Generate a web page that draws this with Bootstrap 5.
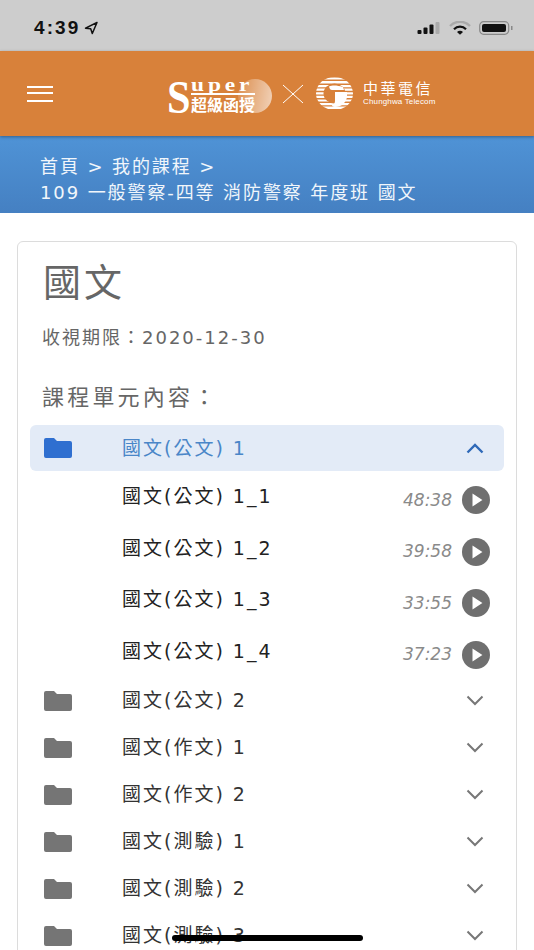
<!DOCTYPE html>
<html lang="zh-Hant">
<head>
    <meta charset="UTF-8" />
    <meta name="viewport" content="width=device-width, initial-scale=1.0"/>
    <title>國文</title>
    <link href="https://cdn.jsdelivr.net/npm/bootstrap@5.3.3/dist/css/bootstrap.min.css" rel="stylesheet"/>
    <style>
        html, body {
            height: 950px;
            overflow: hidden;
        }
        body {
            background-color: #fff;
            font-family: "DejaVu Sans", "Noto Sans CJK TC", sans-serif;
            position: relative;
        }
        .status-bar {
            height: 51px;
            background-color: #cdcdcd;
            padding: 4px 21px 0 34px;
            color: #111;
        }
        .status-time {
            font-family: "Liberation Sans", sans-serif;
            font-size: 19px;
            font-weight: 700;
            letter-spacing: 2.1px;
            line-height: 1;
        }
        .top-bar {
            height: 85px;
            background-color: #d8813a;
            padding-left: 27px;
            box-shadow: 0 1px 3px rgba(0, 0, 0, .35);
            position: relative;
            z-index: 2;
            color: #fff;
        }
        .burger {
            width: 26px;
            height: 16px;
            border-top: 2.5px solid #fff;
            border-bottom: 2.5px solid #fff;
            position: relative;
        }
        .burger::after {
            content: "";
            position: absolute;
            left: 0;
            right: 0;
            top: 4.2px;
            height: 2.5px;
            background: #fff;
        }
        .logo-wrap {
            margin-left: 114px;
        }
        .logo-super {
            width: 105px;
            height: 34px;
            position: relative;
        }
        .logo-s {
            position: absolute;
            left: 0;
            top: -3px;
            font: 700 46px/48px "Liberation Serif", serif;
            transform: scaleX(.92);
            transform-origin: left;
        }
        .logo-uper {
            position: absolute;
            left: 24px;
            top: 0;
            font: 700 18px/16px "Liberation Serif", serif;
            letter-spacing: 3px;
            transform: scaleX(1.3);
            transform-origin: left;
        }
        .logo-rule {
            position: absolute;
            left: 24px;
            top: 16.5px;
            width: 64px;
            height: 2px;
            background: #fff;
        }
        .logo-zh {
            position: absolute;
            left: 24px;
            top: 20.5px;
            font: 700 16px/15px "Noto Sans CJK TC", sans-serif;
            white-space: nowrap;
        }
        .logo-moon {
            position: absolute;
            left: 71px;
            top: 2px;
            width: 34px;
            height: 34px;
            border-radius: 50%;
            background: linear-gradient(100deg, rgba(255, 255, 255, .1), rgba(255, 255, 255, .65));
        }
        .logo-x {
            margin: 0 12px 0 10px;
        }
        .logo-g {
            margin-right: 10px;
        }
        .cht-zh {
            font: 400 15px/15px "Noto Sans CJK TC", sans-serif;
            letter-spacing: 2.5px;
            white-space: nowrap;
        }
        .cht-en {
            font: 400 8px/10px "Liberation Sans", sans-serif;
            white-space: nowrap;
            margin-top: 2px;
            letter-spacing: .15px;
        }
        .crumb-bar {
            height: 77px;
            background: linear-gradient(#4f93d6, #4580c2);
            color: #f1f6fb;
            padding: 18px 0 0 40px;
            font-size: 18px;
            line-height: 26px;
            letter-spacing: 1.9px;
            white-space: nowrap;
        }
        .course-card {
            margin: 28px 17px 0 17px;
            border: 1px solid #dcdcdc;
            border-radius: 6px;
            height: 900px;
            padding: 12px 12px 0 12px;
            color: #666;
        }
        .course-title {
            font-size: 38px;
            line-height: 58px;
            letter-spacing: 3px;
            margin: 0 0 0 13px;
            font-weight: 400;
        }
        .course-limit {
            font-size: 18px;
            line-height: 24px;
            letter-spacing: 2px;
            margin: 14px 0 0 12px;
        }
        .course-sub {
            font-size: 22px;
            line-height: 30px;
            letter-spacing: 3.2px;
            margin: 33px 0 12px 12px;
        }
        .unit-row {
            height: 47px;
            padding: 0 20px 0 14px;
            border-radius: 6px;
            color: #333;
        }
        .unit-row.is-open {
            height: 46px;
            background-color: #e3ebf7;
            color: #4a86c8;
        }
        .unit-name, .lesson-name {
            font-size: 19px;
            letter-spacing: 2px;
            white-space: nowrap;
        }
        .unit-name {
            margin-left: 50px;
        }
        .lesson-row {
            height: 51.5px;
            padding: 7px 14px 0 92px;
            color: #222;
        }
        .lesson-name {
            position: relative;
            top: -4px;
        }
        .lesson-time {
            font-size: 17px;
            font-style: italic;
            color: #8a8a8a;
            margin-right: 10px;
        }
        .home-bar {
            position: absolute;
            left: 172px;
            top: 935px;
            width: 191px;
            height: 6px;
            border-radius: 3px;
            background: #000;
            z-index: 5;
        }
    </style>
</head>
<body>
    <!-- barre iOS -->
    <div class="status-bar d-flex justify-content-between align-items-center">
        <div class="d-flex align-items-center gap-1">
            <span class="status-time">4:39</span>
            <svg width="14" height="14" viewBox="0 0 14 14"><path d="M13 1.5 1.5 7.2l5.2.6 1.6 4.7z" fill="none" stroke="#111" stroke-width="1.5" stroke-linejoin="round"/></svg>
        </div>
        <div class="d-flex align-items-center gap-2">
            <svg width="25" height="14" viewBox="0 0 24 14"><rect x="1" y="9" width="4" height="4" rx="1" fill="#111"/><rect x="7" y="6.5" width="4" height="6.5" rx="1" fill="#111"/><rect x="13" y="3.5" width="4" height="9.5" rx="1" fill="#111"/><rect x="19" y="1" width="4" height="12" rx="1" fill="#aaa"/></svg>
            <svg width="22" height="14" viewBox="0 0 22 14"><path d="M1 5a14 14 0 0 1 20 0" fill="none" stroke="#aaa" stroke-width="2.4"/><path d="M5 8.2a8.5 8.5 0 0 1 12 0" fill="none" stroke="#111" stroke-width="2.2"/><path d="M8 11a4 4 0 0 1 6 0l-3 2.8z" fill="#111"/></svg>
            <svg width="34" height="14" viewBox="0 0 34 14"><rect x=".7" y=".7" width="29" height="12.6" rx="4" fill="none" stroke="#888" stroke-width="1.2"/><rect x="3" y="3" width="24" height="8" rx="2" fill="#111"/><rect x="32" y="5" width="1.5" height="4" fill="#888"/></svg>
        </div>
    </div>

    <!-- entete -->
    <div class="top-bar d-flex align-items-center">
        <div class="burger"></div>
        <div class="logo-wrap d-flex align-items-center">
            <div class="logo-super">
                <span class="logo-moon"></span>
                <span class="logo-s">S</span>
                <span class="logo-uper">uper</span>
                <span class="logo-rule"></span>
                <span class="logo-zh">超級函授</span>
            </div>
            <svg class="logo-x" width="22" height="20" viewBox="0 0 22 20"><path d="M1 1 21 19M21 1 1 19" stroke="#fff" stroke-width="1" fill="none"/></svg>
            <svg class="logo-g" width="37" height="33" viewBox="0 0 37 33">
                <clipPath id="rond"><ellipse cx="18.5" cy="16.5" rx="18.5" ry="16.5"/></clipPath>
                <g clip-path="url(#rond)">
                    <path d="M0 .5h37v2H0zM0 4h37v2.4H0zM0 8h37v2.2H0zM0 11.6h37v2.2H0zM0 15.2h37v2.2H0zM0 18.8h37v2.2H0zM0 22.4h37v2.2H0zM0 26h37v2.2H0zM0 29.6h37v2.4H0z" fill="#fff"/>
                    <ellipse cx="18.5" cy="16.5" rx="11" ry="10" fill="#d8813a"/>
                    <path d="M13 9.5c3-1.500 8-1.500 14 .5l1 3H16c-1.500 0-2.500-1-3-3.500z" fill="#fff"/>
                    <path d="M19 15h12v5c-1 6-6 10-12 10-2 0-3-1-3-2 3-1 3-3 3-5z" fill="#fff"/>
                </g>
            </svg>
            <div>
                <div class="cht-zh">中華電信</div>
                <div class="cht-en">Chunghwa Telecom</div>
            </div>
        </div>
    </div>

    <!-- fil d'ariane -->
    <div class="crumb-bar">
        <div>首頁 &gt; 我的課程 &gt;</div>
        <div>109 一般警察-四等 消防警察 年度班 國文</div>
    </div>

    <div class="course-card">
        <h1 class="course-title">國文</h1>
        <p class="course-limit">收視期限：2020-12-30</p>
        <p class="course-sub">課程單元內容：</p>

        <div class="unit-row is-open d-flex align-items-center">
            <svg width="28" height="20" viewBox="0 0 28 20"><path d="M2 0h8l3 3h13a2 2 0 0 1 2 2v13a2 2 0 0 1-2 2H2a2 2 0 0 1-2-2V2a2 2 0 0 1 2-2z" fill="#2f6fd0"/></svg>
            <span class="unit-name flex-grow-1">國文(公文) 1</span>
            <svg width="18" height="11" viewBox="0 0 18 11"><path d="M1.500 9.500 9 2l7.500 7.500" fill="none" stroke="#2f69b8" stroke-width="2.400"/></svg>
        </div>

        <div id="lessons"></div>
        <div id="units"></div>
    </div>

    <div class="home-bar"></div>

    <script>
        const lessons = [["1_1", "48:38"], ["1_2", "39:58"], ["1_3", "33:55"], ["1_4", "37:23"]];
        const units = ["公文) 2", "作文) 1", "作文) 2", "測驗) 1", "測驗) 2", "測驗) 3"];

        document.getElementById("lessons").innerHTML = lessons.map(l => `
            <div class="lesson-row d-flex align-items-center">
                <span class="lesson-name flex-grow-1">國文(公文) ${l[0]}</span>
                <span class="lesson-time">${l[1]}</span>
                <svg width="28" height="28" viewBox="0 0 24 24"><circle cx="12" cy="12" r="12" fill="#6f6f6f"/><path d="M9 6.500v11l8.500-5.500z" fill="#fff"/></svg>
            </div>`).join("");

        document.getElementById("units").innerHTML = units.map(u => `
            <div class="unit-row d-flex align-items-center">
                <svg width="28" height="20" viewBox="0 0 28 20"><path d="M2 0h8l3 3h13a2 2 0 0 1 2 2v13a2 2 0 0 1-2 2H2a2 2 0 0 1-2-2V2a2 2 0 0 1 2-2z" fill="#757575"/></svg>
                <span class="unit-name flex-grow-1">國文(${u}</span>
                <svg width="18" height="11" viewBox="0 0 18 11"><path d="M1.500 1.500 9 9l7.500-7.500" fill="none" stroke="#777" stroke-width="2"/></svg>
            </div>`).join("");
    </script>
    <script src="https://cdn.jsdelivr.net/npm/bootstrap@5.3.3/dist/js/bootstrap.bundle.min.js"></script>
</body>
</html>
